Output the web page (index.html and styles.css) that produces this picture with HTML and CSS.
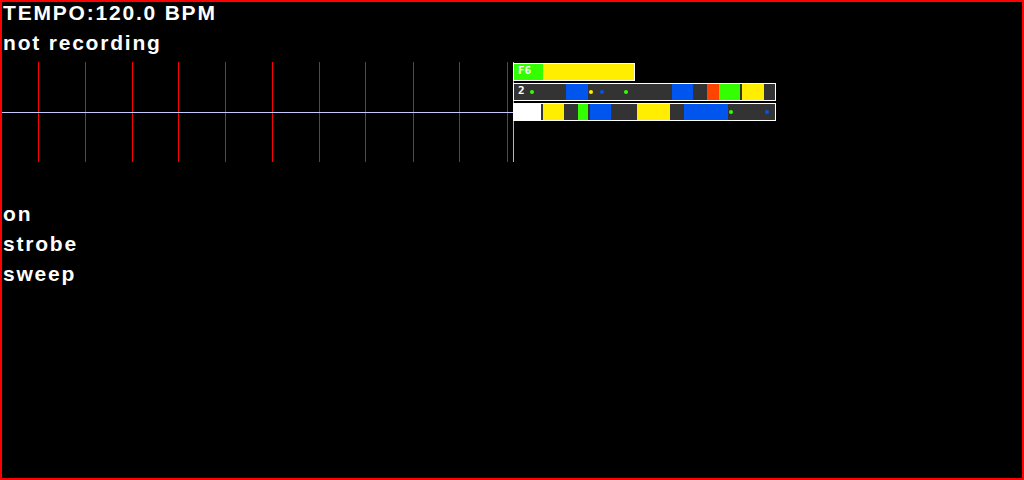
FILE: index.html
```html
<!DOCTYPE html>
<html>
<head>
<meta charset="utf-8">
<link rel="stylesheet" href="styles.css">
</head>
<body>
<div class="screen">
  <div class="status">
    <div class="line">TEMPO:120.0 BPM</div>
    <div class="line">not recording</div>
  </div>
  <div class="timeline">
    <div class="beats">
      <div class="beat" style="left:36px"></div>
      <div class="beat" style="left:83px"></div>
      <div class="beat" style="left:130px"></div>
      <div class="beat" style="left:176px"></div>
      <div class="beat" style="left:223px"></div>
      <div class="beat" style="left:270px"></div>
      <div class="beat" style="left:317px"></div>
      <div class="beat" style="left:363px"></div>
      <div class="beat" style="left:411px"></div>
      <div class="beat" style="left:457px"></div>
      <div class="beat" style="left:505px"></div>
      <div class="hline"></div>
      <div class="cursor"></div>
    </div>
    <div class="tracks">
      <div class="track short">
        <div class="seg green" style="left:0;width:29px"></div>
        <div class="seg yellow" style="left:29px;width:91px"></div>
        <span class="label">F6</span>
      </div>
      <div class="track">
        <div class="seg blue" style="left:52px;width:22px"></div>
        <div class="seg blue" style="left:158px;width:21px"></div>
        <div class="seg red" style="left:193px;width:12px"></div>
        <div class="seg green" style="left:205px;width:21px"></div>
        <div class="seg yellow" style="left:228px;width:22px"></div>
        <span class="label">2</span>
        <span class="dot green" style="left:16px"></span>
        <span class="dot yellow" style="left:75px"></span>
        <span class="dot blue" style="left:86px"></span>
        <span class="dot green" style="left:110px"></span>
      </div>
      <div class="track">
        <div class="seg white" style="left:0;width:27px"></div>
        <div class="seg yellow" style="left:29px;width:21px"></div>
        <div class="seg green" style="left:64px;width:10px"></div>
        <div class="seg blue" style="left:76px;width:21px"></div>
        <div class="seg yellow" style="left:123px;width:33px"></div>
        <div class="seg blue" style="left:170px;width:44px"></div>
        <span class="dot green" style="left:215px"></span>
        <span class="dot blue" style="left:251px"></span>
      </div>
    </div>
  </div>
  <div class="modes">
    <div class="line">on</div>
    <div class="line">strobe</div>
    <div class="line">sweep</div>
  </div>
</div>
</body>
</html>
```
FILE: styles.css
```css
html, body {
  margin: 0;
  padding: 0;
  background: #000;
}
.screen {
  box-sizing: border-box;
  width: 1024px;
  height: 480px;
  border: 2px solid #ff0000;
  background: #000;
  color: #fff;
  font-family: "Liberation Sans", Arial, sans-serif;
  font-weight: bold;
  display: flex;
  flex-direction: column;
}
.line {
  font-size: 21px;
  line-height: 30px;
  letter-spacing: 1.8px;
  padding-left: 1px;
  white-space: nowrap;
}
.status {
  margin-top: -4px;
}
.timeline {
  margin-top: 4px;
  height: 100px;
  display: flex;
  position: relative;
}
.beats {
  position: relative;
  width: 511px;
  height: 100px;
  flex: none;
}
.beat {
  position: absolute;
  top: 0;
  width: 1px;
  height: 100px;
  background: #ff0000;
}
.hline {
  position: absolute;
  left: 0;
  top: 50px;
  width: 511px;
  height: 1px;
  background: #c8c8ff;
}
.cursor {
  position: absolute;
  left: 511px;
  top: 0;
  width: 1px;
  height: 100px;
  background: #b4b4b4;
}
.tracks {
  display: flex;
  flex-direction: column;
  gap: 2px;
  margin-top: 1px;
}
.track {
  position: relative;
  box-sizing: border-box;
  width: 263px;
  height: 18px;
  border: 1px solid #fff;
  background: #333;
}
.track.short {
  width: 122px;
}
.seg {
  position: absolute;
  top: 0;
  height: 16px;
}
.green { background: #33ff00; }
.yellow { background: #ffee00; }
.blue { background: #0055ee; }
.red { background: #ff4400; }
.white { background: #fff; }
.label {
  position: absolute;
  left: 4px;
  top: 1px;
  font-family: "DejaVu Sans Mono", monospace;
  font-size: 11px;
  line-height: 12px;
  font-weight: bold;
  color: #fff;
}
.dot {
  position: absolute;
  top: 6px;
  width: 4px;
  height: 4px;
  border-radius: 2px;
}
.modes {
  margin-top: 37px;
}
```
